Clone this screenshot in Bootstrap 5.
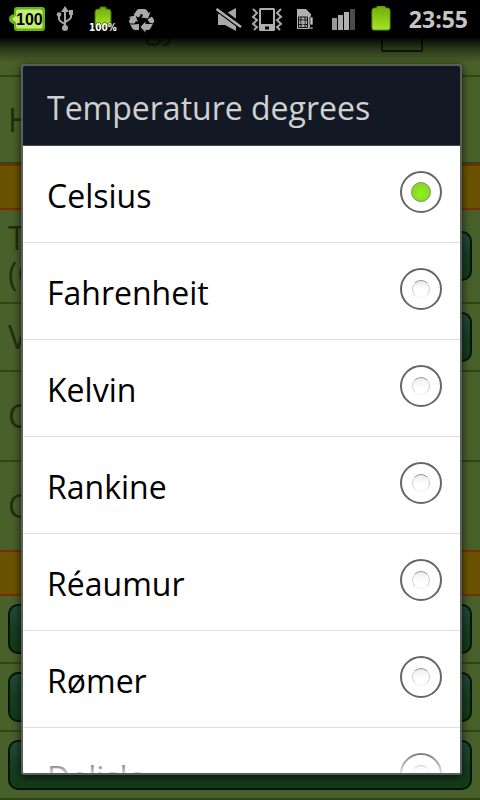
<!DOCTYPE html>
<html lang="en">
<head>
<meta charset="utf-8">
<meta name="viewport" content="width=device-width, initial-scale=1">
<title>Temperature degrees</title>
<link href="https://cdn.jsdelivr.net/npm/bootstrap@5.3.0/dist/css/bootstrap.min.css" rel="stylesheet">
<style>
body { font-family: "Open Sans", "Noto Sans", sans-serif; background: #48602a; min-height: 100vh; }
.screen { height: 100vh; min-height: 400px; }
.status-bar { height: 38px; background: #000; z-index: 3; padding: 0 12px 0 8px; }
.status-bar::after { content: ""; position: absolute; left: 0; right: 0; top: 100%; height: 24px; background: linear-gradient(#000e, #0007 40%, #0000); pointer-events: none; }
.clock { font-size: 23px; line-height: 38px; font-weight: 700; color: #c4c4c4; }
.pref { font-size: 32px; line-height: 36px; color: #1d3010; padding: 0 8px; border-bottom: 2px solid #2f4611; }
.pref-first { height: 39px; }
.pref-first span { line-height: 20px; margin-top: -22px; }
.pref-check { width: 42px; height: 42px; appearance: none; border: 2px solid #142208; border-radius: 2px; margin: -28px 49px 0 0; }
.pref-tall { height: 87px; }
.pref-double { height: 94px; }
.pref-short { height: 68px; }
.pref-mid { height: 90px; }
.pref-last { height: 88px; border: 0; }
.section-band { height: 46px; background: #6a5300; border: solid #7c2c04; border-width: 2px 0; }
.deep-btn { height: 50px; border: 2px solid #03140a; border-radius: 10px; background: linear-gradient(#244a38, #163e22 50%, #133b16); }
.deep-btn.value-btn { width: 100px; }
.dialog-layer { z-index: 2; padding: 26px 18px 25px 21px; inset: 38px 0 0 0; }
.dialog-box { border: 2px solid #59605c; border-radius: 3px; background: #fff; box-shadow: 0 2px 9px #000b; }
.dialog-title { height: 80px; flex: none; background: #121925; border-bottom: 1px solid #454a50; padding: 4px 24px 0; font-size: 32px; line-height: 44px; font-weight: 400; color: #d0d0d0; }
.choices { min-height: 0; }
.choices::after { content: ""; position: absolute; inset: auto 0 0 0; height: 24px; background: linear-gradient(#fff0, #fffc); }
.choice { height: 97px; flex: none; border-bottom: 1px solid #dfdfdf; padding: 0 18px 0 24px; font-size: 32px; line-height: 44px; color: #000; }
.choice label { padding-top: 4px; }
.choice input { appearance: none; width: 42px; height: 42px; flex: none; margin: 0 0 4px; border: 2px solid #666; border-radius: 50%; display: grid; place-items: center; background: #fff; }
.choice input::before { content: ""; width: 18px; height: 18px; border-radius: 50%; border: 1px solid; border-color: #8c8c8c #d0d0d0 #f0f0f0; background: linear-gradient(#ededed, #fff 60%); }
.choice input:checked::before { width: 20px; height: 20px; border-color: #7b8f70; background: radial-gradient(circle at 50% 60%, #93f01f, #7ed321); }
</style>
</head>
<body>
<div class="screen position-relative overflow-hidden d-flex flex-column">
  <header class="status-bar position-relative d-flex align-items-center justify-content-between flex-shrink-0">
    <svg width="148" height="38" viewBox="8 0 148 38" role="img" aria-label="Battery 100, USB, recycling">
      <defs><linearGradient id="cell" x2="0" y2="1"><stop stop-color="#72ad08"/><stop offset="1" stop-color="#a6e524"/></linearGradient></defs>
      <path d="M17 7h25q3 0 3 3v18q0 3-3 3H17q-3 0-3-3v-4q-5-1-5-5t5-5v-4q0-3 3-3z" fill="#68b512"/>
      <path d="M18 9.500h22q2.500 0 2.500 2.500v14q0 2.500-2.500 2.500H18q-2 0-2-2v-4l-4-3.500 4-3.500v-4q0-2 2-2z" fill="#c5ee78"/>
      <text x="16" y="25" font-family="Liberation Sans Narrow,Liberation Sans,sans-serif" font-size="16" font-weight="700" fill="#000">100</text>
      <g fill="none" stroke="#a8a8a8" stroke-width="2"><path d="M65 10v17M59 15v4q0 2 6 5M71 14v3q0 2-6 5"/></g>
      <g fill="#a8a8a8"><path d="M65 6l4 6h-8z"/><circle cx="65" cy="28" r="3"/><circle cx="59" cy="14.500" r="2.300"/><path d="M69 10h4v5h-4z"/></g>
      <path d="M98 9h2V7h6v2h2q3 0 3 3v15H95V12q0-3 3-3z" fill="url(#cell)" stroke="#3c7004"/>
      <text x="89" y="31" font-family="DejaVu Sans Condensed,DejaVu Sans,sans-serif" font-size="10" font-weight="700" fill="#fff" stroke="#000" stroke-width="1" paint-order="stroke">100%</text>
      <path d="M133.500 15l3.500-5q1-1.500 3-1l3.500.500-4.500 8zM141.500 9h3q1.500 0 2.500 1.500l1.500 2.500 2-1-2.500 6.500-7-1 2-1.500-2.500-5zM147.500 19.500l4.500-3 2 3.500q1 2-1 3-2 .500-3.500-.500zM153 23.500l-2.500 5q-1 1.500-3 1.500h-2v2.500l-5-5.500 5-5.500v2.500h4.500q2 0 3-.500zM139 24v6h-4q-2 0-3-2l-2-4q1 .500 3 .500zM129.500 23q-1-1.500 0-3l1-2-2-1 7-1.500 2.500 6.500-2-1-1.500 2.500h-3q-1.500 0-2-.500z" fill="#aaa"/>
    </svg>
    <div class="d-flex align-items-center">
      <svg width="194" height="38" viewBox="215 0 194 38" role="img" aria-label="Muted, vibrate, SIM error, signal, battery">
        <path d="M218 14h7l11-6v23l-11-6h-7z" fill="#a8a8a8"/>
        <path d="M215 7l27 20" stroke="#000" stroke-width="6"/><path d="M216.500 9l24.500 18" stroke="#b0b0b0" stroke-width="2.500"/>
        <rect x="259" y="8" width="16" height="23" rx="1.500" fill="#b0b0b0"/><path d="M261 10h12v14h-12zM265 26.500h4v3h-4z" fill="#000"/>
        <path d="M253 9l4 4-4 4 4 3-4 4 4 3-3 3M281 9l-4 4 4 4-4 3 4 4-4 3 3 3" fill="none" stroke="#a8a8a8" stroke-width="2"/>
        <path d="M297 9h9l5 5v3h-1v12h-13z" fill="#b0b0b0"/>
        <path d="M298.500 17h9v10.500h-9zM301 17v10M305 17v10M298 20h10M298 24.500h10" fill="none" stroke="#111"/><path d="M301.500 20.500h3v4h-3z" fill="#a8a8a8"/>
        <path d="M310 17h3v8h-3zM310 27h3v2h-3z" fill="#c8c8c8" stroke="#000" stroke-width=".7"/>
        <path d="M332 18h5v12h-5z" fill="#999"/><path d="M338 15h5v15h-5z" fill="#aaa"/><path d="M344 12h5v18h-5z" fill="#b0b0b0"/><path d="M350 9h5v21h-5z" fill="#4b4b4b"/>
        <path d="M375 8h2V6.500h8V8h2q3 0 3 3v17q0 2-2 2h-14q-2 0-2-2V11q0-3 3-3z" fill="url(#cell)" stroke="#5c9a08"/>
      </svg>
      <span class="clock">23:55</span>
    </div>
  </header>

  <main class="flex-grow-1" aria-hidden="true">
    <div class="pref pref-first d-flex justify-content-between align-items-start"><span>Technology</span><input class="pref-check" type="checkbox" tabindex="-1" aria-label="Technology"></div>
    <div class="pref pref-tall d-flex align-items-center">Health</div>
    <div class="section-band"></div>
    <div class="pref pref-double d-flex align-items-center justify-content-between"><span>Temperature<br>(Celsius)</span><button class="deep-btn value-btn" type="button" tabindex="-1" aria-label="Temperature degrees"></button></div>
    <div class="pref pref-short d-flex align-items-center justify-content-between"><span>Voltage</span><button class="deep-btn value-btn" type="button" tabindex="-1" aria-label="Voltage"></button></div>
    <div class="pref pref-mid d-flex align-items-center">Capacity</div>
    <div class="pref pref-last d-flex align-items-center">Charge</div>
    <div class="section-band"></div>
    <div class="pref pref-short d-flex align-items-center"><button class="deep-btn w-100" type="button" tabindex="-1" aria-label="Option one"></button></div>
    <div class="pref pref-short d-flex align-items-center"><button class="deep-btn w-100" type="button" tabindex="-1" aria-label="Option two"></button></div>
    <div class="pref pref-short d-flex align-items-center"><button class="deep-btn w-100" type="button" tabindex="-1" aria-label="Option three"></button></div>
  </main>

  <div class="dialog-layer position-absolute d-flex">
    <section class="dialog-box flex-grow-1 d-flex flex-column overflow-hidden" role="dialog" aria-labelledby="dialog-title">
      <h1 id="dialog-title" class="dialog-title m-0 d-flex align-items-center">Temperature degrees</h1>
      <div class="choices position-relative flex-grow-1 overflow-hidden d-flex flex-column">
        <div class="choice d-flex align-items-center"><label class="flex-grow-1" for="d1">Celsius</label><input type="radio" name="deg" id="d1" checked></div>
        <div class="choice d-flex align-items-center"><label class="flex-grow-1" for="d2">Fahrenheit</label><input type="radio" name="deg" id="d2"></div>
        <div class="choice d-flex align-items-center"><label class="flex-grow-1" for="d3">Kelvin</label><input type="radio" name="deg" id="d3"></div>
        <div class="choice d-flex align-items-center"><label class="flex-grow-1" for="d4">Rankine</label><input type="radio" name="deg" id="d4"></div>
        <div class="choice d-flex align-items-center"><label class="flex-grow-1" for="d5">Réaumur</label><input type="radio" name="deg" id="d5"></div>
        <div class="choice d-flex align-items-center"><label class="flex-grow-1" for="d6">Rømer</label><input type="radio" name="deg" id="d6"></div>
        <div class="choice d-flex align-items-center"><label class="flex-grow-1" for="d7">Delisle</label><input type="radio" name="deg" id="d7"></div>
      </div>
    </section>
  </div>
</div>
<script src="https://cdn.jsdelivr.net/npm/bootstrap@5.3.0/dist/js/bootstrap.bundle.min.js"></script>
</body>
</html>
